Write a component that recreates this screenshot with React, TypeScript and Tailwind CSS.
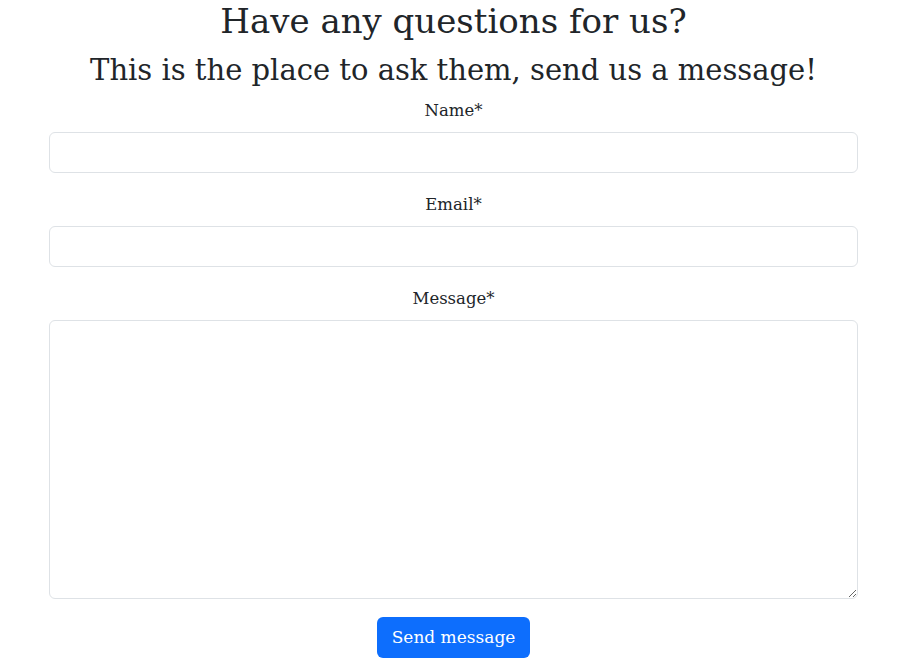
export default function App() {
  return (
    <div className="min-h-screen bg-white text-[#212529] font-['DejaVu_Serif',serif]">
      <div className="ml-[49px] flex w-[809px] flex-col items-center">
        <h1 className="mt-[1px] text-[34px] leading-[40px]">Have any questions for us?</h1>
        <h2 className="mt-[11px] text-[29px] leading-[36px]">
          This is the place to ask them, send us a message!
        </h2>
        <form className="mt-[11px] flex w-full flex-col items-center">
          <label htmlFor="name" className="text-[16.5px] leading-[24px]">
            Name*
          </label>
          <input
            id="name"
            type="text"
            required
            className="mt-[9px] h-[41px] w-full rounded-[6px] border border-[#dee2e6] px-3"
          />
          <label htmlFor="email" className="mt-[20px] text-[16.5px] leading-[24px]">
            Email*
          </label>
          <input
            id="email"
            type="email"
            required
            className="mt-[9px] h-[41px] w-full rounded-[6px] border border-[#dee2e6] px-3"
          />
          <label htmlFor="message" className="mt-[20px] text-[16.5px] leading-[24px]">
            Message*
          </label>
          <textarea
            id="message"
            required
            className="mt-[9px] h-[279px] w-full rounded-[6px] border border-[#dee2e6] px-3 py-2"
          />
          <button
            type="submit"
            className="mt-[18px] h-[41px] rounded-[6px] bg-[#0d6efd] px-[15px] text-[17px] text-white"
          >
            Send message
          </button>
        </form>
      </div>
    </div>
  )
}
